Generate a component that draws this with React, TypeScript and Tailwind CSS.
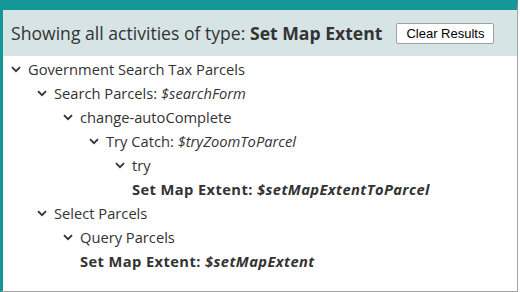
import type { ReactNode } from 'react';

type Node = {
  label: ReactNode;
  children?: Node[];
};

const tree: Node[] = [
  {
    label: 'Government Search Tax Parcels',
    children: [
      {
        label: (
          <>
            Search Parcels: <i>$searchForm</i>
          </>
        ),
        children: [
          {
            label: 'change-autoComplete',
            children: [
              {
                label: (
                  <>
                    Try Catch: <i>$tryZoomToParcel</i>
                  </>
                ),
                children: [
                  {
                    label: 'try',
                    children: [
                      {
                        label: (
                          <b className="tracking-[0.4px]">
                            Set Map Extent: <i>$setMapExtentToParcel</i>
                          </b>
                        ),
                      },
                    ],
                  },
                ],
              },
            ],
          },
        ],
      },
      {
        label: 'Select Parcels',
        children: [
          {
            label: 'Query Parcels',
            children: [
              {
                label: (
                  <b className="tracking-[0.4px]">
                    Set Map Extent: <i>$setMapExtent</i>
                  </b>
                ),
              },
            ],
          },
        ],
      },
    ],
  },
];

const indents = ['pl-0', 'pl-[26px]', 'pl-[52px]', 'pl-[78px]', 'pl-[104px]', 'pl-[130px]'];

function Chevron() {
  return (
    <svg width="10" height="7" viewBox="0 0 10 7" className="ml-[8px]">
      <path d="M1 1.2 L5 5.2 L9 1.2" fill="none" stroke="#333" strokeWidth="1.8" />
    </svg>
  );
}

function TreeRow({ node, level }: { node: Node; level: number }) {
  const hasKids = !!node.children?.length;
  // leaves sit under their parent's label, no chevron
  const indent = hasKids ? indents[level] : indents[level - 1];
  return (
    <>
      <div className={`flex items-center h-[24px] ${indent}`}>
        <div className="w-[25px] shrink-0 flex items-center">{hasKids && <Chevron />}</div>
        <span className="whitespace-nowrap">{node.label}</span>
      </div>
      {node.children?.map((c, i) => (
        <TreeRow key={i} node={c} level={level + 1} />
      ))}
    </>
  );
}

export default function App() {
  return (
    <div
      className="w-[518px] h-[292px] bg-white border-l-[3px] border-t-[10px] border-r border-b border-l-[#149797] border-t-[#149797] border-r-[#a3a3a3] border-b-[#a3a3a3] flex flex-col text-[#333]"
      style={{ fontFamily: '"Open Sans", "Noto Sans", sans-serif' }}
    >
      <div className="h-[46px] bg-[#d6e4e5] flex items-center pl-[8px] shrink-0">
        <span className="text-[17.6px] whitespace-nowrap">
          Showing all activities of type: <b>Set Map Extent</b>
        </span>
        <button
          className="ml-[14px] h-[21px] px-[9px] bg-white border border-[#a0a0a0] rounded-[2px] text-[13px] text-black leading-none"
          style={{ fontFamily: '"Liberation Sans", Arial, sans-serif' }}
        >
          Clear Results
        </button>
      </div>
      <div className="pt-[1px] text-[14.7px]">
        {tree.map((n, i) => (
          <TreeRow key={i} node={n} level={0} />
        ))}
      </div>
    </div>
  );
}
